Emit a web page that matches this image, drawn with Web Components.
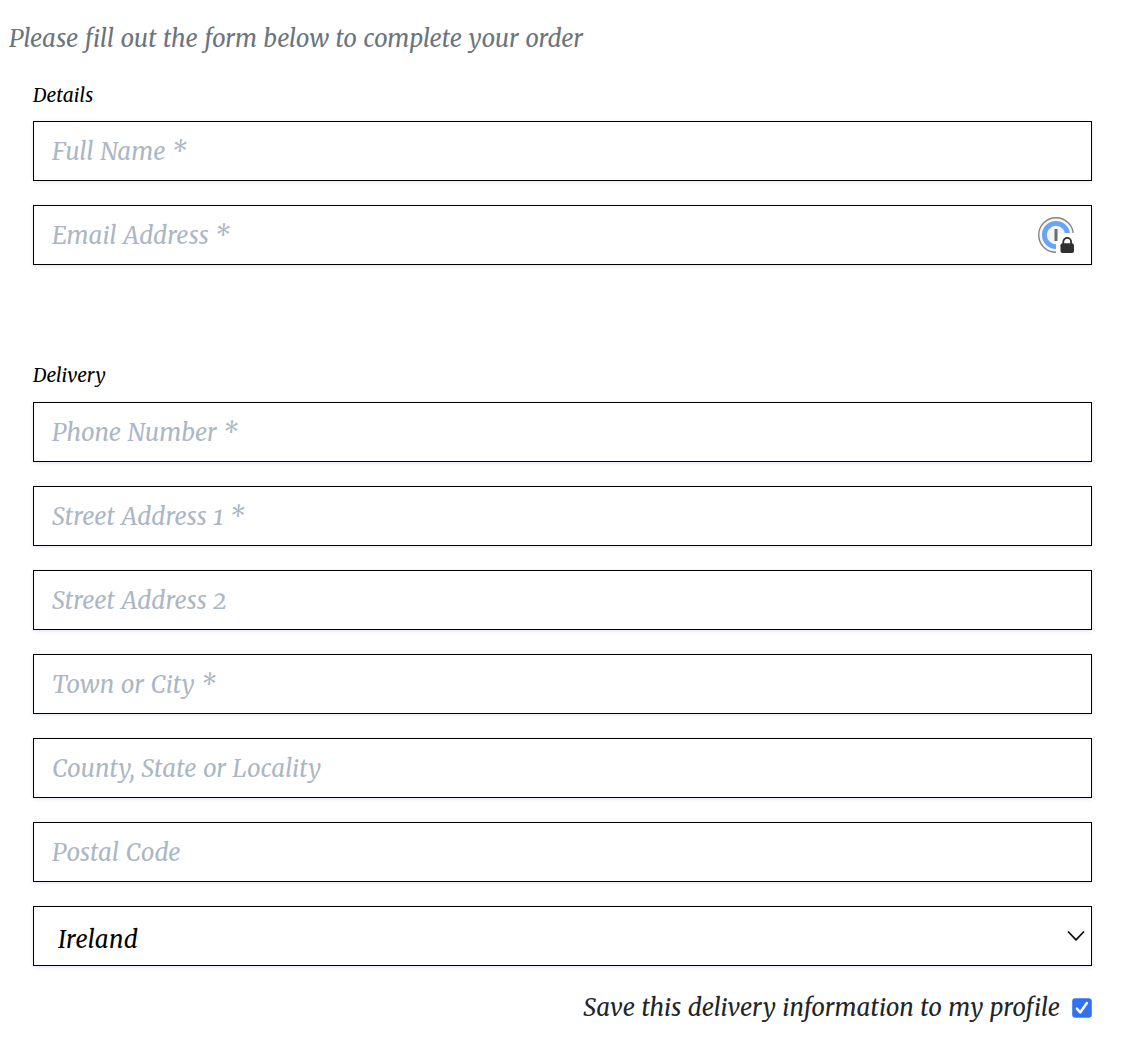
<!DOCTYPE html>
<html lang="en">
<head>
<meta charset="utf-8">
<title>Complete your order</title>
<style>
html,body{margin:0;background:#fff}
body{font-family:Merriweather,"Liberation Serif",serif;font-style:italic;font-weight:380;font-size:24px;word-spacing:1.1px;letter-spacing:.03px;font-variant-numeric:oldstyle-nums;color:#212529}
</style>
</head>
<body>
<order-form></order-form>
<script>
class FormField extends HTMLElement {
  constructor() {
    super();
    this.attachShadow({mode:'open'}).innerHTML = `<style>
      :host{display:flex;box-sizing:border-box;height:60px;border:1px solid #000;align-items:center;justify-content:space-between;padding:0 17px 0 18px;color:#abb7c5;background:#fff;box-shadow:0 1px 4px #dfe4ee;line-height:36px;letter-spacing:.08px}
      .text{padding-top:2px}
      :host([select]){color:#000;padding:6px 6px 0 24px;letter-spacing:.4px}
      </style><div class="text"><slot></slot></div><slot name="icon"></slot>`;
  }
}
customElements.define('form-field', FormField);

class FormSection extends HTMLElement {
  constructor() {
    super();
    this.attachShadow({mode:'open'}).innerHTML = `<style>
      :host{display:flex;flex-direction:column;gap:24px}
      .legend{font-size:19.2px;line-height:30px;height:30px;margin-bottom:var(--legend-pull,-12px);color:#000}
      </style><div class="legend"><slot name="legend"></slot></div><slot></slot>`;
  }
}
customElements.define('form-section', FormSection);

class LockIcon extends HTMLElement {
  constructor() {
    super();
    this.attachShadow({mode:'open'}).innerHTML = `<style>:host{display:block;width:36px;height:36px}svg{display:block;overflow:visible}</style>
    <svg width="36" height="36" viewBox="0 0 36 36">
      <circle cx="18" cy="18" r="17.3" fill="#f6f6f6" stroke="#858585" stroke-width="1.4"/>
      <circle cx="18" cy="18" r="11.6" fill="#f5f5f5" stroke="#68a3f8" stroke-width="4.8"/>
      <path d="M18 37V24.5Q18 21 20 19.5Q22 16 27 16H37V37Z" fill="#fff"/>
      <rect x="16.5" y="12" width="3" height="12" fill="#6b6b6b"/>
      <path d="M25.3 28V24.8a3.9 3.9 0 0 1 7.8 0V28" fill="none" stroke="#303030" stroke-width="1.8"/>
      <rect x="22.5" y="26.3" width="13.5" height="9.7" rx="2" fill="#303030"/>
    </svg>`;
  }
}
customElements.define('lock-icon', LockIcon);

class ChevronIcon extends HTMLElement {
  constructor() {
    super();
    this.attachShadow({mode:'open'}).innerHTML = `<style>:host{display:block;width:18px;height:16px;margin-top:-6px}svg{display:block}</style>
    <svg width="18" height="16" viewBox="0 0 18 16"><path d="M1.5 4 9 11.8 16.5 4" fill="none" stroke="#111" stroke-width="1.8" stroke-linecap="round" stroke-linejoin="round"/></svg>`;
  }
}
customElements.define('chevron-icon', ChevronIcon);

class CheckBox extends HTMLElement {
  constructor() {
    super();
    this.attachShadow({mode:'open'}).innerHTML = `<style>:host{display:block;width:20px;height:20px}svg{display:block}</style>
    <svg width="20" height="20" viewBox="0 0 20 20"><rect x=".2" y=".2" width="19.6" height="19.6" rx="3.2" fill="#3072f3"/><path d="M4.9 10.7 8.2 14.4 14.9 5" fill="none" stroke="#fff" stroke-width="2.5" stroke-linecap="round" stroke-linejoin="round"/></svg>`;
  }
}
customElements.define('check-box', CheckBox);

class OrderForm extends HTMLElement {
  constructor() {
    super();
    this.attachShadow({mode:'open'}).innerHTML = `<style>
      :host{display:block;box-sizing:border-box;width:1140px;height:1052px;padding:21px 48px 0 33px;overflow:hidden}
      .intro{margin-left:-24px;height:36px;line-height:36px;color:#6c757d;margin-bottom:23px}
      .details{--legend-pull:-13px}
      .delivery{margin-top:95px}
      .save{display:flex;justify-content:flex-end;align-items:center;gap:12px;height:36px;line-height:36px;margin-top:24px;letter-spacing:.06px}
    </style>
    <div class="intro">Please fill out the form below to complete your order</div>
    <form-section class="details">
      <span slot="legend">Details</span>
      <form-field><span>Full Name *</span></form-field>
      <form-field><span>Email Address *</span><lock-icon slot="icon"></lock-icon></form-field>
    </form-section>
    <form-section class="delivery">
      <span slot="legend">Delivery</span>
      <form-field><span>Phone Number *</span></form-field>
      <form-field><span>Street Address 1 *</span></form-field>
      <form-field><span>Street Address 2</span></form-field>
      <form-field><span>Town or City *</span></form-field>
      <form-field><span>County, State or Locality</span></form-field>
      <form-field><span>Postal Code</span></form-field>
      <form-field select><span>Ireland</span><chevron-icon slot="icon"></chevron-icon></form-field>
    </form-section>
    <div class="save"><span>Save this delivery information to my profile</span><check-box></check-box></div>`;
  }
}
customElements.define('order-form', OrderForm);
</script>
</body>
</html>
